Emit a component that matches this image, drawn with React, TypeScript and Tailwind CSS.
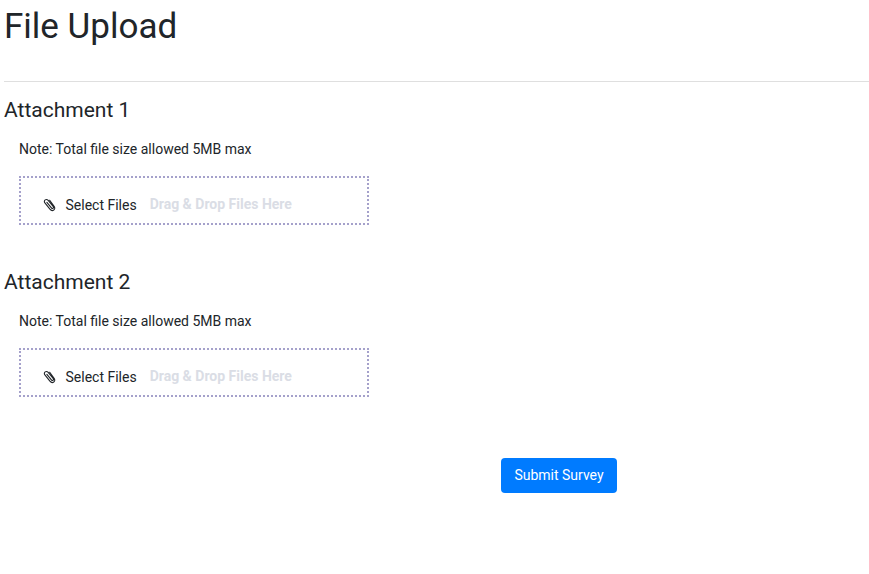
function PaperclipIcon() {
  return (
    <svg className="h-[14px] w-[14px] shrink-0" viewBox="0 0 14 14" fill="none" stroke="#212529" strokeWidth="1.1" strokeLinecap="round">
      <path d="M3.9 4.4 8.4 9.8c1.2 1.4 2.8.2 1.7-1.3L5.2 2.4C3.3.3.1 2.4 1.9 4.9l5 6.3c2.5 3 6.4.2 4.2-2.8L6.7 2.3" />
    </svg>
  );
}

function Attachment({ title }: { title: string }) {
  return (
    <section className="h-[172px]">
      <h2 className="text-[21px] leading-[25px]">{title}</h2>
      <div className="pt-[16px] pl-[15px]">
        <p className="text-[14px] leading-[21px]">Note: Total file size allowed 5MB max</p>
        <div className="mt-[16px] flex h-[49px] w-[350px] items-center border-2 border-dotted border-[#a5a1cb] pt-[10px] pl-[21.5px] text-[14px] leading-[21px]">
          <div className="-mt-[2px]"><PaperclipIcon /></div>
          <span className="ml-[9px]">Select Files</span>
          <span className="relative -top-px ml-[13px] font-bold text-[#dadde5]">Drag &amp; Drop Files Here</span>
        </div>
      </div>
    </section>
  );
}

export default function App() {
  return (
    <main className="h-[574px] overflow-hidden bg-white pl-[4px] font-['Roboto',sans-serif] text-[#212529]">
      <h1 className="pt-[6px] text-[35px] leading-[42px]">File Upload</h1>
      <hr className="mt-[33px] mb-[16px] border-t border-[#dfdfdf]" />
      <Attachment title="Attachment 1" />
      <Attachment title="Attachment 2" />
      <button className="mt-[16px] ml-[497px] block h-[35px] w-[116px] rounded-[4px] bg-[#007bff] text-[14px] leading-[21px] text-white">
        Submit Survey
      </button>
    </main>
  );
}
